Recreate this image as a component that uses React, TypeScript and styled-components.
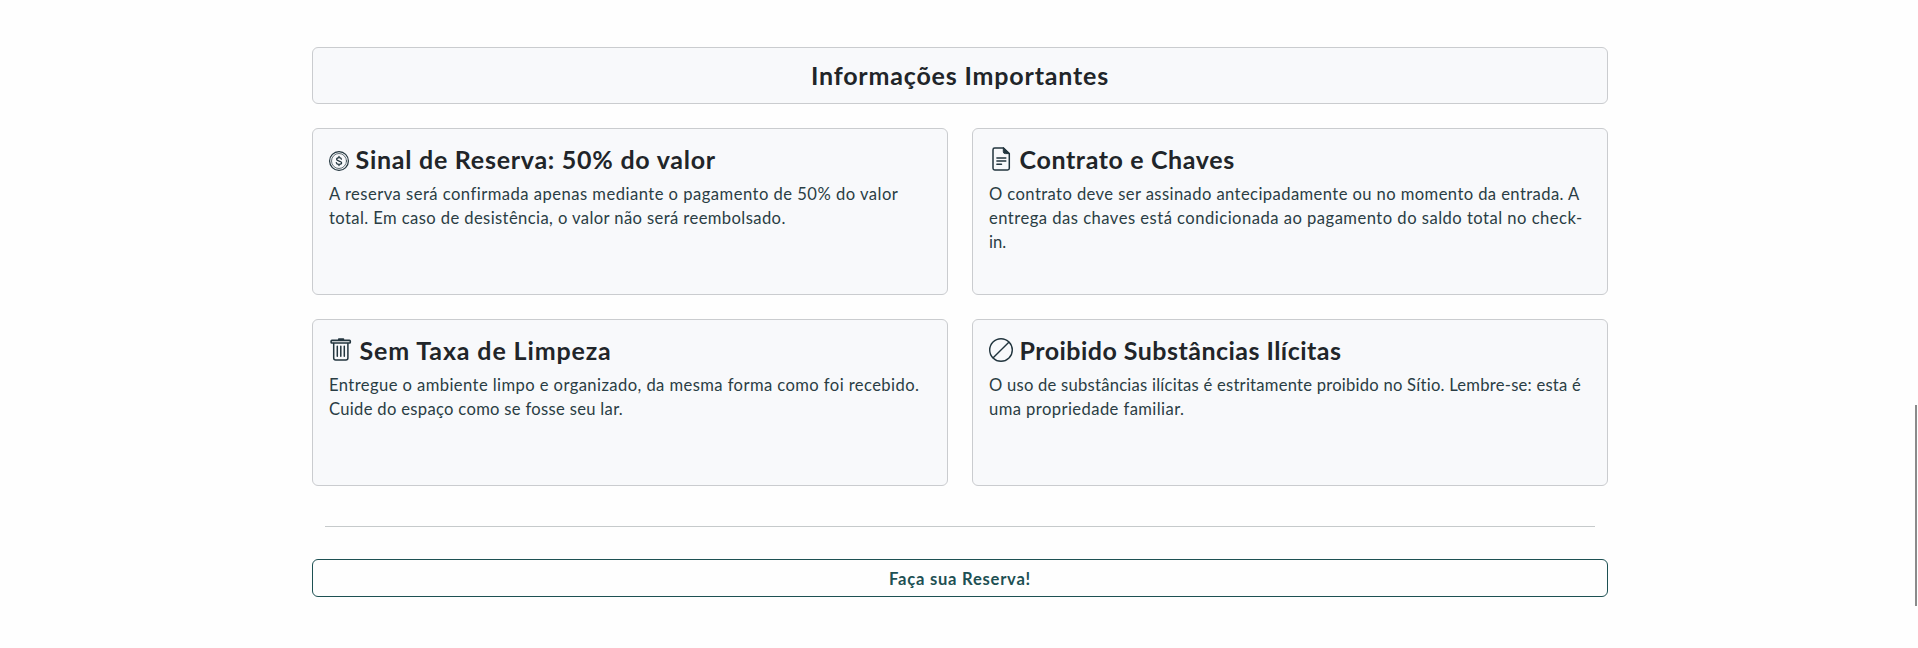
import React from "react";
import styled, { createGlobalStyle } from "styled-components";

const GlobalStyle = createGlobalStyle`
  * { box-sizing: border-box; }
  body {
    margin: 0;
    background: #fefefe;
    color: #212529;
    font-family: Lato, "Open Sans", sans-serif;
    overflow: hidden;
  }
`;

const Page = styled.main`
  min-height: 648px;
  padding: 47px 0 0 2px;
`;

const Container = styled.div`
  width: 1296px;
  margin: 0 auto;
  display: flex;
  flex-direction: column;
`;

const Panel = styled.section`
  background: #f8f9fb;
  border: 1px solid #cacccf;
  border-radius: 6px;
`;

const Banner = styled(Panel)`
  height: 57px;
  padding-top: 13px;
  margin-bottom: 24px;
  text-align: center;
`;

const Cards = styled.div`
  display: grid;
  grid-template-columns: 1fr 1fr;
  grid-auto-rows: 167px;
  gap: 24px;
`;

const Card = styled(Panel)`
  padding: 16px;
`;

const Heading = styled.h4<{ $tracking: number }>`
  margin: 0;
  font-size: 25px;
  font-weight: 700;
  line-height: 29px;
  letter-spacing: ${(p) => p.$tracking}px;
  white-space: nowrap;
`;

const CardHead = styled.div`
  display: flex;
  align-items: flex-start;
  gap: 6.5px;
  height: 29px;
  margin-bottom: 8px;
`;

const Icon = styled.svg`
  flex: none;
  height: 24px;
  margin-top: 2px;
  fill: none;
  stroke: #22353e;
  stroke-width: 1.5;
  stroke-linecap: round;
  stroke-linejoin: round;
`;

const Text = styled.p`
  margin: 0;
  font-size: 16.6px;
  line-height: 24px;
  color: #2a3d44;
`;

const Line = styled.span<{ $tracking: number }>`
  display: block;
  white-space: nowrap;
  font-variant-ligatures: none;
  letter-spacing: ${(p) => p.$tracking}px;
`;

const Divider = styled.hr`
  width: 1270px;
  height: 1px;
  margin: 40px 13px 32px;
  border: 0;
  background: #c6cacb;
`;

const ReserveButton = styled.button`
  height: 38px;
  padding: 7px 12px 5px;
  border: 1px solid #1d5053;
  border-radius: 6px;
  background: transparent;
  color: #1d5053;
  font: 700 16.6px/24px Lato, "Open Sans", sans-serif;
  letter-spacing: 0.75px;
`;

const ScrollThumb = styled.div`
  position: fixed;
  top: 405px;
  right: 1px;
  width: 2px;
  height: 201px;
  background: #8a8b8b;
`;

const CoinIcon = () => (
  <Icon width="20" viewBox="0 0 20 24">
    <circle cx="10" cy="14" r="9.4" strokeWidth="1.2" />
    <circle cx="10" cy="14" r="7.5" strokeWidth="0.7" />
    <path d="M12.4 12.2c-.2-1-1.1-1.5-2.4-1.5s-2.4.5-2.4 1.6c0 2.4 5 1.1 5 3.5 0 1.1-1.100 1.600-2.600 1.600s-2.500-.6-2.700-1.700M10 9.500v1.200M10 17.400v1.200" strokeWidth="1.300" />
  </Icon>
);

const FileIcon = () => (
  <Icon width="24" viewBox="0 0 24 24">
    <path d="M14.5 1H5.7Q4 1 4 2.7v18.6Q4 23 5.7 23h12.9q1.7 0 1.7-1.7V6.5z" />
    <path d="M14.3 1v3.6q0 2 2 2h4z" fill="#22353e" strokeWidth="1" />
    <path d="M7.9 11h8.9M7.9 14h8.9M7.9 17.3h4.6" />
  </Icon>
);

const TrashIcon = () => (
  <Icon width="24" viewBox="0 0 24 24">
    <path d="M9.9 1.2h4.4" strokeWidth="2" />
    <rect x="2.1" y="2.4" width="19.2" height="2.6" rx=".8" strokeWidth="1.6" />
    <path d="M4.7 5.5v14.6q0 2 2 2h10.2q2 0 2-2V5.5" />
    <path d="M8.3 8.3v10M11.8 8.3v10M15.3 8.3v10" />
  </Icon>
);

const BanIcon = () => (
  <Icon width="24" viewBox="0 0 24 24">
    <circle cx="12" cy="12" r="11.3" strokeWidth="1.4" />
    <path d="M4.2 19.8 19.8 4.2" strokeWidth="1.4" />
  </Icon>
);

type CardData = {
  icon: React.ReactNode;
  title: string;
  tracking: number;
  lines: [string, number][];
};

const cards: CardData[] = [
  {
    icon: <CoinIcon />,
    title: "Sinal de Reserva: 50% do valor",
    tracking: 0.74,
    lines: [
      ["A reserva será confirmada apenas mediante o pagamento de 50% do valor", 0.475],
      ["total. Em caso de desistência, o valor não será reembolsado.", 0.4],
    ],
  },
  {
    icon: <FileIcon />,
    title: "Contrato e Chaves",
    tracking: 0.62,
    lines: [
      ["O contrato deve ser assinado antecipadamente ou no momento da entrada. A", 0.408],
      ["entrega das chaves está condicionada ao pagamento do saldo total no check-", 0.48],
      ["in.", 0],
    ],
  },
  {
    icon: <TrashIcon />,
    title: "Sem Taxa de Limpeza",
    tracking: 0.87,
    lines: [
      ["Entregue o ambiente limpo e organizado, da mesma forma como foi recebido.", 0.415],
      ["Cuide do espaço como se fosse seu lar.", 0.31],
    ],
  },
  {
    icon: <BanIcon />,
    title: "Proibido Substâncias Ilícitas",
    tracking: 0.47,
    lines: [
      ["O uso de substâncias ilícitas é estritamente proibido no Sítio. Lembre-se: esta é", 0.24],
      ["uma propriedade familiar.", 0.42],
    ],
  },
];

export default function App() {
  return (
    <Page>
      <GlobalStyle />
      <Container>
        <Banner>
          <Heading $tracking={0.82}>Informações Importantes</Heading>
        </Banner>
        <Cards>
          {cards.map((card) => (
            <Card key={card.title}>
              <CardHead>
                {card.icon}
                <Heading $tracking={card.tracking}>{card.title}</Heading>
              </CardHead>
              <Text>
                {card.lines.map(([line, tracking]) => (
                  <Line key={line} $tracking={tracking}>{line}</Line>
                ))}
              </Text>
            </Card>
          ))}
        </Cards>
        <Divider />
        <ReserveButton>Faça sua Reserva!</ReserveButton>
      </Container>
      <ScrollThumb />
    </Page>
  );
}
